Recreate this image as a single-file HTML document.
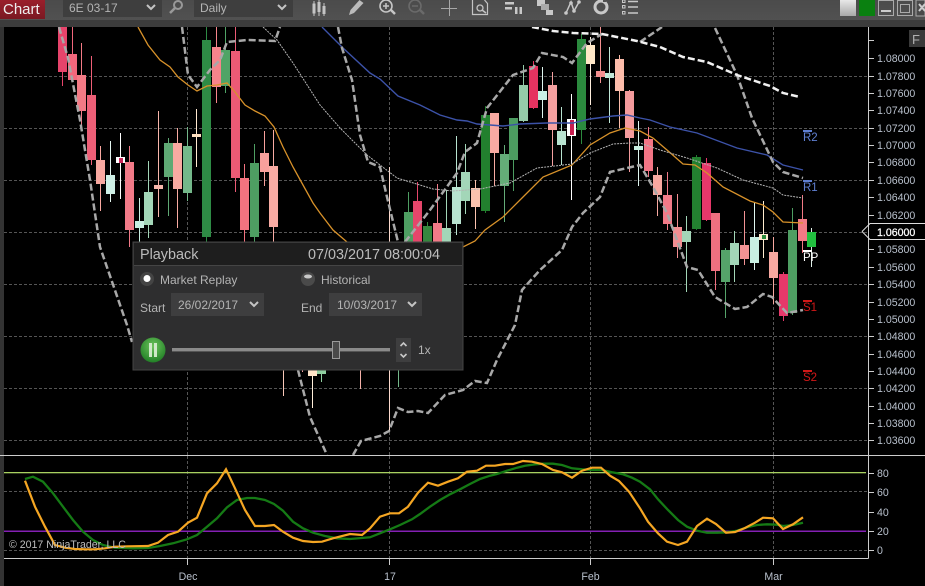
<!DOCTYPE html>
<html><head><meta charset="utf-8"><style>
html,body{margin:0;padding:0;background:#000;width:925px;height:586px;overflow:hidden}
svg{display:block;font-family:"Liberation Sans",sans-serif}
</style></head><body>
<svg width="925" height="586" viewBox="0 0 925 586" xmlns="http://www.w3.org/2000/svg">
<defs>
<clipPath id="c"><rect x="4" y="27" width="864" height="428"/></clipPath>
<linearGradient id="tb" x1="0" y1="0" x2="0" y2="1"><stop offset="0" stop-color="#4b4b4b"/><stop offset="1" stop-color="#515151"/></linearGradient>
<linearGradient id="red" x1="0" y1="0" x2="0" y2="1"><stop offset="0" stop-color="#9a1f2b"/><stop offset="1" stop-color="#7a1822"/></linearGradient>
<radialGradient id="pl" cx=".5" cy=".35" r=".7"><stop offset="0" stop-color="#6cc45c"/><stop offset="1" stop-color="#1c7a22"/></radialGradient>
<linearGradient id="gb" x1="0" y1="0" x2="0" y2="1"><stop offset="0" stop-color="#e8e8e8"/><stop offset="1" stop-color="#a8a8a8"/></linearGradient>
</defs>
<rect width="925" height="586" fill="#000"/>
<rect x="0" y="0" width="925" height="20" fill="url(#tb)"/>
<rect x="0" y="20" width="925" height="7" fill="#3c3c3c"/>
<rect x="0" y="27" width="4" height="559" fill="#333"/>
<rect x="0" y="0" width="45" height="19" fill="url(#red)"/>
<text x="3" y="14" font-size="15" fill="#eee">Chart</text>
<rect x="63" y="0" width="99" height="17" fill="#3e3e3e"/>
<text x="69" y="12" font-size="12" fill="#b4b4b4">6E 03-17</text>
<path d="M147 5l4 4 4-4" fill="none" stroke="#c4c4c4" stroke-width="2"/>
<circle cx="178" cy="5" r="4" fill="none" stroke="#999" stroke-width="2"/><path d="M175 8l-5 5" stroke="#999" stroke-width="2.5"/>
<rect x="194" y="0" width="99" height="17" fill="#3e3e3e"/>
<text x="200" y="12" font-size="12" fill="#b4b4b4">Daily</text>
<path d="M278 5l4 4 4-4" fill="none" stroke="#c4c4c4" stroke-width="2"/>
<g fill="#c4c4c4" stroke="#c4c4c4"><rect x="313" y="4" width="2" height="9"/><path d="M314 1v15M319 0v16M324 3v13" stroke-width="1"/><rect x="317.500" y="2" width="3" height="10" stroke="none"/><rect x="322.500" y="6" width="3" height="8" stroke="none"/></g>
<path d="M349 15l1.500-5 9-10 4 3-9.500 10z" fill="#bbb"/>
<g fill="none" stroke="#c6c6c6"><circle cx="386" cy="6" r="6" stroke-width="1.600"/><path d="M383 6h6M386 3v6" stroke-width="1.500"/><path d="M391 10l4 4" stroke-width="2.500"/></g>
<g fill="none" stroke="#6a6a6a"><circle cx="415" cy="6" r="6" stroke-width="1.600"/><path d="M412 6h6" stroke-width="1.500"/><path d="M420 10l4 4" stroke-width="2.500"/></g>
<path d="M441 8.500h16M449.500 0v16" stroke="#a8a8a8" stroke-width="1"/>
<g fill="none" stroke="#c4c4c4"><path d="M472.500 0v14.500h15v-11l-3-3.500" stroke-width="1.200"/><circle cx="480" cy="8" r="3" stroke-width="1.300"/><path d="M482 10l4 3" stroke-width="1.600"/></g>
<g fill="#c8c8c8"><rect x="505" y="2" width="9" height="2.500"/><rect x="505" y="7" width="7" height="2.500"/><rect x="515" y="7" width="2.500" height="7"/><rect x="519.500" y="7" width="2.500" height="7"/></g>
<g fill="#c8c8c8"><rect x="537" y="0" width="8" height="6"/><rect x="541" y="4" width="8" height="6" fill="#aaa"/><rect x="546" y="10" width="7" height="5"/></g>
<g fill="none" stroke="#c8c8c8" stroke-width="1.500"><path d="M566 13l5-11 3 9 5-9"/></g><g fill="#c8c8c8"><circle cx="566" cy="13" r="1.800"/><circle cx="571" cy="3" r="1.800"/><circle cx="574" cy="11" r="1.800"/><circle cx="579" cy="2" r="1.800"/></g>
<circle cx="601" cy="7" r="6" fill="none" stroke="#c8c8c8" stroke-width="3"/><rect x="603" y="-1" width="3" height="3" fill="#505050"/>
<g fill="none" stroke="#c8c8c8"><rect x="622.500" y="0" width="2.500" height="2.500"/><rect x="622.500" y="5.500" width="2.500" height="2.500"/><rect x="622.500" y="11.500" width="2.500" height="2.500"/></g>
<path d="M628 1.500h10M628 7h10M628 13h10" stroke="#c8c8c8" stroke-width="1.600"/>
<rect x="840" y="0" width="16" height="16" fill="url(#gb)"/>
<rect x="859" y="0" width="16" height="16" fill="#0a8010"/>
<g fill="none" stroke="#aaa"><rect x="878.500" y="0.500" width="15" height="15"/><rect x="897.500" y="0.500" width="15" height="15"/><rect x="900.500" y="4.500" width="9" height="8"/></g>
<rect x="881" y="10" width="10" height="2" fill="#ccc"/>
<rect x="916" y="0" width="9" height="16" fill="#4a4a4a" stroke="#aaa"/><path d="M919 4l6 7M925 4l-6 7" stroke="#ccc" stroke-width="2"/>

<g stroke="#555" stroke-width="1" stroke-dasharray="3 2" fill="none" shape-rendering="crispEdges">
<path d="M4 76.500H868M4 128.500H868M4 180.500H868M4 232.500H868M4 284.500H868M4 336.500H868M4 388.500H868M4 440.500H868"/>
<path d="M187.500 27V455M389.500 27V455M590.500 27V455M773.500 27V455"/>
<path d="M4 491.500H868M4 550.500H868M187.500 456V558M389.500 456V558M590.500 456V558M773.500 456V558"/>
</g>

<g clip-path="url(#c)">
<g stroke-width="1" shape-rendering="crispEdges">
<path d="M62.500 27V86" stroke="#e6446b"/><rect x="58" y="27" width="9" height="45" fill="#e6446b"/>
<path d="M72.500 27V80" stroke="#f2677c"/><rect x="68" y="54" width="9" height="26" fill="#f2677c"/>
<path d="M81.500 43V125" stroke="#f37a85"/><rect x="77" y="75" width="9" height="36" fill="#f37a85"/>
<path d="M91.500 56V165" stroke="#ee5f77"/><rect x="87" y="95" width="9" height="65" fill="#ee5f77"/>
<path d="M100.500 146V211" stroke="#f8a8a0"/><rect x="96" y="160" width="9" height="24" fill="#f8a8a0"/>
<path d="M110.500 141V202" stroke="#e4f6f0"/><rect x="106" y="175" width="9" height="19" fill="#cef0e6"/>
<path d="M120.500 133V199" stroke="#fff"/><rect x="116" y="157" width="9" height="6" fill="#fff"/><rect x="119" y="158" width="4" height="5" fill="#c8285a"/>
<path d="M129.500 146V247" stroke="#f27a88"/><rect x="125" y="162" width="9" height="68" fill="#f27a88"/>
<path d="M139.500 198V245" stroke="#c8efe2"/><rect x="135" y="221" width="9" height="7" fill="#c8efe2"/>
<path d="M148.500 161V238" stroke="#a3d6b8"/><rect x="144" y="192" width="9" height="33" fill="#a3d6b8"/>
<path d="M158.500 111V217" stroke="#f8b6ab"/><rect x="154" y="185" width="9" height="4" fill="#f8b6ab"/>
<path d="M168.500 138V216" stroke="#5fa974"/><rect x="164" y="143" width="9" height="34" fill="#5fa974"/>
<path d="M177.500 128V228" stroke="#f9aaa2"/><rect x="173" y="143" width="9" height="46" fill="#f9aaa2"/>
<path d="M187.500 127V201" stroke="#74b88a"/><rect x="183" y="146" width="9" height="47" fill="#74b88a"/>
<path d="M196.500 109V167" stroke="#ffe8d0"/><rect x="192" y="134" width="9" height="3" fill="#ffe0c0"/>
<path d="M206.500 27V242" stroke="#2e8b45"/><rect x="202" y="40" width="9" height="197" fill="#2e8b45"/>
<path d="M216.500 27V103" stroke="#f6848b"/><rect x="212" y="47" width="9" height="40" fill="#f6848b"/>
<path d="M225.500 27V93" stroke="#4fa466"/><rect x="221" y="50" width="9" height="36" fill="#4fa466"/>
<path d="M235.500 27V192" stroke="#ec5a75"/><rect x="231" y="51" width="9" height="127" fill="#ec5a75"/>
<path d="M244.500 164V245" stroke="#f3737f"/><rect x="240" y="178" width="9" height="52" fill="#f3737f"/>
<path d="M254.500 144V245" stroke="#4e9e62"/><rect x="250" y="163" width="9" height="74" fill="#4e9e62"/>
<path d="M264.500 131V186" stroke="#f8a09c"/><rect x="260" y="153" width="9" height="19" fill="#f8a09c"/>
<path d="M273.500 130V245" stroke="#f8aba3"/><rect x="269" y="166" width="9" height="61" fill="#f8aba3"/>
<path d="M283.500 360V396" stroke="#f8c8b8"/><path d="M302.500 360V372" stroke="#f4a0a0"/>
<path d="M312.500 360V408" stroke="#ffeeda"/><rect x="308" y="360" width="9" height="16" fill="#ffe4c8"/>
<path d="M321.500 360V382" stroke="#8fce9f"/><rect x="317" y="360" width="9" height="14" fill="#8fce9f"/>
<path d="M360.500 360V389" stroke="#f4b0a8"/><path d="M389.500 167V431" stroke="#fbd8cc"/><path d="M398.500 360V387" stroke="#74b88a"/>
<path d="M408.500 192V245" stroke="#4e9e62"/><rect x="404" y="212" width="9" height="33" fill="#4e9e62"/>
<path d="M417.500 182V245" stroke="#e6466b"/><rect x="413" y="201" width="9" height="44" fill="#e6466b"/>
<path d="M427.500 222V245" stroke="#37873f"/><rect x="423" y="226" width="9" height="19" fill="#37873f"/>
<path d="M437.500 184V245" stroke="#f27a88"/><rect x="433" y="223" width="9" height="22" fill="#f27a88"/>
<path d="M446.500 190V245" stroke="#a3d6b8"/><rect x="442" y="228" width="9" height="17" fill="#a3d6b8"/>
<path d="M456.500 136V235" stroke="#b8e3d0"/><rect x="452" y="187" width="9" height="37" fill="#b8e3d0"/>
<path d="M465.500 144V214" stroke="#a3d6b8"/><rect x="461" y="172" width="9" height="29" fill="#a3d6b8"/>
<path d="M475.500 180V229" stroke="#fbc2ae"/><rect x="471" y="188" width="9" height="19" fill="#fbc2ae"/>
<path d="M485.500 106V213" stroke="#22802e"/><rect x="481" y="115" width="9" height="96" fill="#22802e"/>
<path d="M494.500 113V186" stroke="#f8aaa2"/><rect x="490" y="113" width="9" height="40" fill="#f8aaa2"/>
<path d="M504.500 145V222" stroke="#64ac78"/><rect x="500" y="154" width="9" height="32" fill="#64ac78"/>
<path d="M513.500 118V191" stroke="#4c9c60"/><rect x="509" y="118" width="9" height="42" fill="#4c9c60"/>
<path d="M523.500 65V122" stroke="#95cba9"/><rect x="519" y="85" width="9" height="36" fill="#95cba9"/>
<path d="M533.500 61V109" stroke="#e53360"/><rect x="529" y="66" width="9" height="42" fill="#e53360"/>
<path d="M542.500 67V118" stroke="#dff6ef"/><rect x="538" y="91" width="9" height="9" fill="#caf0e6"/>
<path d="M552.500 72V166" stroke="#f5a0a0"/><rect x="548" y="85" width="9" height="45" fill="#f5a0a0"/>
<path d="M561.500 107V165" stroke="#b8e3d0"/><rect x="557" y="131" width="9" height="14" fill="#b8e3d0"/>
<path d="M571.500 94V200" stroke="#fff"/><rect x="567" y="119" width="9" height="17" fill="#fff"/><rect x="570" y="120" width="4" height="15" fill="#c81e50"/>
<path d="M581.500 34V144" stroke="#2b8a3e"/><rect x="577" y="39" width="9" height="91" fill="#2b8a3e"/>
<path d="M590.500 37V105" stroke="#ffeedd"/><rect x="586" y="45" width="9" height="19" fill="#ffe8c8"/>
<path d="M600.500 27V83" stroke="#f49090"/><rect x="596" y="71" width="9" height="6" fill="#f49090"/>
<path d="M609.500 47V123" stroke="#c0e8d8"/><rect x="605" y="73" width="9" height="5" fill="#c0e8d8"/>
<path d="M619.500 55V128" stroke="#fcbcaa"/><rect x="615" y="59" width="9" height="32" fill="#fcbcaa"/>
<path d="M629.500 90V172" stroke="#f39a9c"/><rect x="625" y="91" width="9" height="47" fill="#f39a9c"/>
<path d="M638.500 121V186" stroke="#dff6ef"/><rect x="634" y="146" width="9" height="4" fill="#c8efe2"/>
<path d="M648.500 127V177" stroke="#f37585"/><rect x="644" y="139" width="9" height="32" fill="#f37585"/>
<path d="M657.500 167V216" stroke="#f8a8a0"/><rect x="653" y="175" width="9" height="20" fill="#f8a8a0"/>
<path d="M667.500 172V230" stroke="#f27a88"/><rect x="663" y="195" width="9" height="29" fill="#f27a88"/>
<path d="M677.500 194V258" stroke="#f28e92"/><rect x="673" y="227" width="9" height="20" fill="#f28e92"/>
<path d="M686.500 216V292" stroke="#a3d6b8"/><rect x="682" y="231" width="9" height="11" fill="#a3d6b8"/>
<path d="M696.500 155V230" stroke="#238030"/><rect x="692" y="157" width="9" height="72" fill="#238030"/>
<path d="M706.500 158V221" stroke="#e6386a"/><rect x="702" y="163" width="9" height="57" fill="#e6386a"/>
<path d="M715.500 213V290" stroke="#ef7080"/><rect x="711" y="213" width="9" height="58" fill="#ef7080"/>
<path d="M725.500 248V318" stroke="#55a46a"/><rect x="721" y="250" width="9" height="32" fill="#55a46a"/>
<path d="M734.500 231V282" stroke="#a3d6b8"/><rect x="730" y="243" width="9" height="22" fill="#a3d6b8"/>
<path d="M744.500 211V265" stroke="#f39294"/><rect x="740" y="245" width="9" height="14" fill="#f39294"/>
<path d="M754.500 202V270" stroke="#dff6ef"/><rect x="750" y="237" width="9" height="26" fill="#c8efe2"/>
<path d="M763.500 201V258" stroke="#ffeccf"/><rect x="759" y="234" width="9" height="6" fill="#ffeccf"/><rect x="762" y="235" width="4" height="4" fill="#2a8a3a"/>
<path d="M773.500 237V304" stroke="#f8a8a0"/><rect x="769" y="252" width="9" height="26" fill="#f8a8a0"/>
<path d="M783.500 272V321" stroke="#e6386a"/><rect x="779" y="274" width="9" height="42" fill="#e6386a"/>
<path d="M792.500 208V315" stroke="#4e9e62"/><rect x="788" y="230" width="9" height="83" fill="#4e9e62"/>
<path d="M802.500 195V253" stroke="#f37a85"/><rect x="798" y="219" width="9" height="22" fill="#f37a85"/>
<path d="M811.500 228V267" stroke="#dff0e8"/><rect x="807" y="232" width="9" height="15" fill="#22c040"/>
</g>
<g fill="none">
<polyline stroke="#d8922a" stroke-width="1.300" points="138,27 148,45 160,60 170,67 178,77 188,85 197,91 207,86 217,85 227,83 235,92 245,105 255,111 265,116 274,127 283,147 293,167 303,185 313,203 320,213 333,230 347,242 463,247 475,241 485,230 503,217 523,197 543,177 572,165 590,145 610,133 625,128 640,131 653,138 667,150 683,164 695,165 707,173 723,187 750,201 763,205 773,212 783,222 803,223"/>
<polyline stroke="#b4b4b4" stroke-width="1" stroke-dasharray="2 1" points="263,27 277,40 293,63 320,105 340,128 367,155 397,178 433,189 453,191 480,189 510,183 537,168 572,164 590,153 613,144 630,143 640,143 660,150 687,158 717,168 743,180 773,188 783,195 803,198"/>
<polyline stroke="#3c52a8" stroke-width="1.400" points="322,27 343,48 370,73 380,79 398,96 420,105 440,115 457,120 467,121 477,124 503,126 520,124 547,123 573,123 590,119 613,116 627,115 640,118 650,120 670,127 697,133 737,148 767,155 783,165 803,170"/>
<g stroke="#a8a8a8" stroke-width="2.500" stroke-dasharray="7 3">
<polyline points="59,27 68,58 80,120 90,180 100,247 127,325 132,342"/>
<polyline points="298,370 310,417 327,455"/>
<polyline points="353,455 361,441 380,436 389,431 398,408 408,412 418,411 428,413 445,395 463,390 475,381 487,383 497,360 515,325 522,290 540,270 562,250 572,227 583,213 600,197 610,172 640,165 653,187 667,213 677,240 687,267 698,270 715,297 735,309 747,307 763,294 772,297 787,313 803,310"/>
<polyline points="182,27 188,75 197,87 210,70 220,60 227,42 247,40 275,41 280,27"/>
<polyline points="338,27 342,48 352,80 360,135 368,162 380,167 387,197 398,242"/>
<polyline points="405,242 430,210 457,173 465,152 477,143 487,108 513,75 533,68 542,53 563,57 572,63 587,43 602,34"/>
<polyline points="640,42 662,27"/>
<polyline points="715,28 737,75 752,118 773,162 783,172 803,178"/>
</g>
<polyline stroke="#f0f0f0" stroke-width="2.500" stroke-dasharray="7 3" points="532,27 553,31 573,33 602,34 637,41 660,47 683,57 707,62 737,75 770,86 783,93 800,97"/>
</g>
</g>

<g font-size="11.500" text-anchor="start">
<rect x="803" y="130" width="9" height="2" fill="#5f7fd0"/><text x="803" y="141" fill="#5f7fd0">R2</text>
<rect x="803" y="180" width="9" height="2" fill="#5f7fd0"/><text x="803" y="191" fill="#5f7fd0">R1</text>
<rect x="803" y="250" width="9" height="2" fill="#fff"/><text x="803" y="261" fill="#fff">PP</text>
<rect x="803" y="300" width="9" height="2" fill="#d01818"/><text x="803" y="311" fill="#d01818">S1</text>
<rect x="803" y="370" width="9" height="2" fill="#d01818"/><text x="803" y="381" fill="#d01818">S2</text>
</g>

<g fill="none" stroke="#ccc" stroke-width="1" shape-rendering="crispEdges">
<path d="M0 455.500H925M4 558.500H868.500M868.500 27V558.500"/>
<path d="M868 40.500h6M868 58.500h6M868 76.500h6M868 93.500h6M868 110.500h6M868 128.500h6M868 145.500h6M868 162.500h6M868 180.500h6M868 197.500h6M868 215.500h6M868 284.500h6M868 267.500h6M868 249.500h6M868 302.500h6M868 319.500h6M868 336.500h6M868 354.500h6M868 371.500h6M868 388.500h6M868 406.500h6M868 423.500h6M868 440.500h6"/>
<path d="M868 473.500h6M868 492.500h6M868 512.500h6M868 531.500h6M868 550.500h6"/>
<path d="M187.500 558v7M389.500 558v7M590.500 558v7M773.500 558v7"/>
</g>
<g font-size="10.600" fill="#b8c0cc">
<text x="877" y="62">1.08000</text><text x="877" y="80">1.07800</text><text x="877" y="97">1.07600</text><text x="877" y="114">1.07400</text><text x="877" y="132">1.07200</text><text x="877" y="149">1.07000</text><text x="877" y="166">1.06800</text><text x="877" y="184">1.06600</text><text x="877" y="201">1.06400</text><text x="877" y="219">1.06200</text><text x="877" y="253">1.05800</text><text x="877" y="271">1.05600</text><text x="877" y="288">1.05400</text><text x="877" y="306">1.05200</text><text x="877" y="323">1.05000</text><text x="877" y="340">1.04800</text><text x="877" y="358">1.04600</text><text x="877" y="375">1.04400</text><text x="877" y="392">1.04200</text><text x="877" y="410">1.04000</text><text x="877" y="427">1.03800</text><text x="877" y="444">1.03600</text>
</g>
<path d="M862 231.500l8-8h55M862 231.500l8 8h55" fill="none" stroke="#ddd"/>
<text x="877" y="236" font-size="10.600" fill="#fff" stroke="#fff" stroke-width=".25">1.06000</text>
<rect x="909" y="30" width="16" height="17" fill="#3a3a3a"/><text x="912" y="44" font-size="13" fill="#b0b0b0">F</text>

<rect x="4" y="472" width="862" height="1.300" fill="#a8d060"/>
<rect x="4" y="530.500" width="862" height="1.500" fill="#8420b4"/>
<polyline fill="none" stroke="#157a15" stroke-width="2.300" points="25,479 33,476.700 43,481.700 53,493.300 63,506.700 73,520 83,531.700 93,540 103,545 115,547.700 133,548.300 148,548 160,546 173,543.300 187,539.300 197,535 207,526.700 217,518.300 227,507.300 237,500 247,498 255,498 265,500 274,504 283,510.700 293,521.700 303,528.300 313,532.700 325,536 337,538.300 350,539 370,537.300 380,533.300 390,529.300 400,525 412,519.300 420,514 430,506.700 440,500 450,494.300 460,489.300 470,484 480,479 490,475.700 497,474 507,470.700 517,467.700 525,465.700 535,464.300 543,463.700 553,463.700 562,465 572,468.300 582,469.300 592,470 602,470 612,472.300 623,474.300 632,477.700 640,481.700 650,489.300 658,499.300 668,510 678,520 687,526.700 697,530.700 707,532.700 717,532.700 727,532.300 737,530.700 747,527.300 757,525 767,524.300 777,524.700 783,526 793,525 803,522.700"/>
<polyline fill="none" stroke="#f5a623" stroke-width="2.200" points="25,480.700 35,506.700 45,526.700 55,545 65,547.700 75,549 85,549.300 95,549.300 105,548.300 115,546.700 128,546.300 148,546 158,542.700 168,535 178,531.700 188,522.700 197,517.700 207,493.300 217,483.300 226,469.300 235,488.300 245,510 255,526 265,526 274,525 283,531.700 293,537.700 303,541 313,542 322,541.700 333,538.300 350,534 362,535 370,528.300 380,516.700 390,513.300 399,513.300 408,506.700 418,492.700 428,482.700 438,485.700 448,481.700 458,478.300 467,471.700 477,470.700 486,465.700 495,465.700 505,464 513,464 523,461 532,461.700 542,464 553,470 562,472.300 572,477.700 582,470.700 592,467.700 601,467.700 610,475.700 619,481 629,491.700 640,508.300 648,521.700 658,533.300 667,541.700 678,545 687,541.700 697,526 707,518.700 716,524 726,532.700 735,532 745,528 755,522.700 763,517.700 773,518.300 783,529 793,524.300 803,517.300"/>
<text x="9" y="548" font-size="10.600" fill="#bdbdbd">© 2017 NinjaTrader, LLC</text>
<g font-size="10.600" fill="#b8c0cc">
<text x="877" y="477">80</text><text x="877" y="496">60</text><text x="877" y="516">40</text><text x="877" y="535">20</text><text x="877" y="554">0</text>
<text x="188" y="580" text-anchor="middle">Dec</text><text x="390" y="580" text-anchor="middle">17</text><text x="590.500" y="580" text-anchor="middle">Feb</text><text x="773.500" y="580" text-anchor="middle">Mar</text>
</g>

<rect x="133" y="242" width="330" height="128" fill="#2e2e2f" stroke="#454545"/>
<rect x="134" y="243" width="328" height="23" fill="#1e1e1e"/>
<path d="M134 265.500H462" stroke="#454545" shape-rendering="crispEdges"/>
<text x="140" y="259" font-size="14.400" fill="#bcbcbc">Playback</text>
<text x="308" y="259" font-size="14.400" fill="#bcbcbc">07/03/2017 08:00:04</text>
<circle cx="147" cy="279" r="7" fill="#444"/><circle cx="147" cy="278.500" r="3.500" fill="#fff"/>
<text x="160" y="284" font-size="12" fill="#b4b4b4">Market Replay</text>
<circle cx="308" cy="279" r="7" fill="#4a4a4a"/><ellipse cx="308" cy="276.500" rx="4" ry="2" fill="#c8c8c8"/>
<text x="321" y="284" font-size="12" fill="#b4b4b4">Historical</text>
<text x="140" y="312" font-size="12" fill="#b4b4b4">Start</text>
<rect x="171" y="293" width="93" height="23" fill="#3e3e3f"/>
<text x="178" y="309" font-size="12" fill="#b4b4b4">26/02/2017</text>
<path d="M250 302l4 4 4-4" fill="none" stroke="#c4c4c4" stroke-width="2"/>
<text x="301" y="312" font-size="12" fill="#b4b4b4">End</text>
<rect x="329" y="293" width="93" height="23" fill="#3e3e3f"/>
<text x="337" y="309" font-size="12" fill="#b4b4b4">10/03/2017</text>
<path d="M408 302l4 4 4-4" fill="none" stroke="#c4c4c4" stroke-width="2"/>
<circle cx="153" cy="350" r="12.500" fill="url(#pl)"/>
<rect x="149" y="343" width="3" height="14" fill="#cfe8c8"/><rect x="154" y="343" width="3" height="14" fill="#cfe8c8"/>
<rect x="172" y="348" width="218" height="4" fill="#8a8a8a"/><rect x="172" y="351" width="218" height="1" fill="#555"/>
<rect x="332.500" y="341.500" width="7" height="17" fill="#4a4a4a" stroke="#9a9a9a"/>
<rect x="396" y="338" width="15" height="24" fill="#3e3e3f"/>
<path d="M400.500 346l3-3 3 3M400.500 354l3 3 3-3" fill="none" stroke="#c8c8c8" stroke-width="1.600"/>
<text x="418" y="354" font-size="12" fill="#b4b4b4">1x</text>
</svg>
</body></html>
